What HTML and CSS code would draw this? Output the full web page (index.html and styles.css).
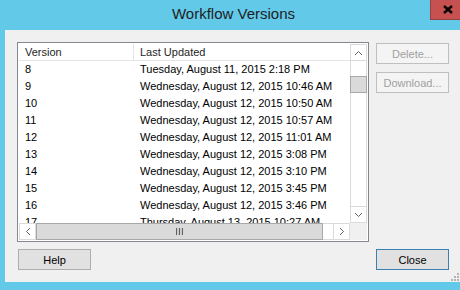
FILE: index.html
```html
<!DOCTYPE html>
<html lang="en">
  <head>
    <meta charset="UTF-8" />
    <meta name="viewport" content="width=device-width, initial-scale=1.0" />
    <title>Workflow Versions</title>
    <link rel="stylesheet" href="styles.css">
  </head>
  <body>
    <div class="window">
      <div class="titlebar">
        <span class="title">Workflow Versions</span>
        <button class="close-x" aria-label="Close">
          <svg width="10" height="9" viewBox="0 0 10 9">
            <path d="M1 1 L9 8 M9 1 L1 8" stroke="#000" stroke-width="2.4" />
          </svg>
        </button>
      </div>

      <div class="client">
        <!-- Versions list -->
        <div class="listview">
          <div class="list-area">
            <div class="list-header">
              <div class="cell">Version</div>
              <div class="cell">Last Updated</div>
            </div>
            <div class="list-row"><div class="cell">8</div><div class="cell">Tuesday, August 11, 2015 2:18 PM</div></div>
            <div class="list-row"><div class="cell">9</div><div class="cell">Wednesday, August 12, 2015 10:46 AM</div></div>
            <div class="list-row"><div class="cell">10</div><div class="cell">Wednesday, August 12, 2015 10:50 AM</div></div>
            <div class="list-row"><div class="cell">11</div><div class="cell">Wednesday, August 12, 2015 10:57 AM</div></div>
            <div class="list-row"><div class="cell">12</div><div class="cell">Wednesday, August 12, 2015 11:01 AM</div></div>
            <div class="list-row"><div class="cell">13</div><div class="cell">Wednesday, August 12, 2015 3:08 PM</div></div>
            <div class="list-row"><div class="cell">14</div><div class="cell">Wednesday, August 12, 2015 3:10 PM</div></div>
            <div class="list-row"><div class="cell">15</div><div class="cell">Wednesday, August 12, 2015 3:45 PM</div></div>
            <div class="list-row"><div class="cell">16</div><div class="cell">Wednesday, August 12, 2015 3:46 PM</div></div>
            <div class="list-row"><div class="cell">17</div><div class="cell">Thursday, August 13, 2015 10:27 AM</div></div>
          </div>

          <div class="vscroll">
            <div class="arrow-box">
              <svg width="9" height="6" viewBox="0 0 9 6"><path d="M1 5 L4.5 1.5 L8 5" fill="none" stroke="#606060" stroke-width="1" /></svg>
            </div>
            <div class="v-gap"></div>
            <div class="v-thumb"></div>
            <div class="v-rest"></div>
            <div class="arrow-box">
              <svg width="9" height="6" viewBox="0 0 9 6"><path d="M1 1 L4.5 4.5 L8 1" fill="none" stroke="#606060" stroke-width="1" /></svg>
            </div>
          </div>

          <div class="hscroll">
            <div class="arrow-box">
              <svg width="6" height="9" viewBox="0 0 6 9"><path d="M5 1 L1.5 4.5 L5 8" fill="none" stroke="#606060" stroke-width="1" /></svg>
            </div>
            <div class="h-thumb">
              <svg width="7" height="7" viewBox="0 0 7 7"><path d="M0.5 0 V7 M3.5 0 V7 M6.5 0 V7" stroke="#606060" stroke-width="1.2" /></svg>
            </div>
            <div class="h-rest"></div>
            <div class="arrow-box">
              <svg width="6" height="9" viewBox="0 0 6 9"><path d="M1 1 L4.5 4.5 L1 8" fill="none" stroke="#606060" stroke-width="1" /></svg>
            </div>
          </div>

          <div class="corner"></div>
        </div>

        <div class="side-buttons">
          <button class="btn" disabled>Delete...</button>
          <button class="btn" disabled>Download...</button>
        </div>

        <div class="footer">
          <button class="btn">Help</button>
          <button class="btn btn-default">Close</button>
        </div>

        <svg class="grip" width="8" height="8" viewBox="0 0 8 8">
          <rect x="6" y="0" width="2" height="2" fill="#b4b4b4" />
          <rect x="3" y="3" width="2" height="2" fill="#b4b4b4" />
          <rect x="6" y="3" width="2" height="2" fill="#b4b4b4" />
          <rect x="0" y="6" width="2" height="2" fill="#b4b4b4" />
          <rect x="3" y="6" width="2" height="2" fill="#b4b4b4" />
          <rect x="6" y="6" width="2" height="2" fill="#b4b4b4" />
        </svg>
      </div>
    </div>
  </body>
</html>
```

FILE: styles.css
```css
* {
  margin: 0;
  padding: 0;
  box-sizing: border-box;
  font-family: "Liberation Sans", Arial, sans-serif;
}

body {
  background-color: #63c9e9;
  overflow: hidden;
  width: 460px;
  height: 290px;
}

/* Window frame */
.window {
  width: 467px;
  padding-bottom: 8px;
  background: #63c9e9;
}

.titlebar {
  position: relative;
  height: 30px;
  display: flex;
  justify-content: center;
}

.title {
  color: #1e1e1e;
  font-size: 15px;
  line-height: 28px;
}

.close-x {
  position: absolute;
  top: 0;
  right: 2px;
  width: 35px;
  height: 20px;
  background: #c75050;
  border: 1px solid #93403f;
  border-top: none;
  display: flex;
  align-items: center;
  justify-content: center;
}

/* Client area */
.client {
  position: relative;
  margin: 0 5px;
  height: 252px;
  background: #f0f0f0;
  padding: 12px 0 0 12px;
  display: grid;
  grid-template-columns: 352px 73px;
  grid-template-rows: 200px 21px;
  column-gap: 7px;
  row-gap: 7px;
}

/* List view */
.listview {
  border: 1px solid #828790;
  padding: 1px;
  background: #fff;
  display: grid;
  grid-template-columns: 1fr 17px;
  grid-template-rows: 1fr 17px;
  overflow: hidden;
}

.list-area {
  overflow: hidden;
  font-size: 11px;
  color: #000;
}

.list-header,
.list-row {
  display: grid;
  grid-template-columns: 115px 230px;
  height: 17px;
  line-height: 16px;
  white-space: nowrap;
}

.list-header {
  border-bottom: 1px solid #e5e5e5;
  color: #1e1e1e;
}

.list-header .cell:first-child {
  border-right: 1px solid #e5e5e5;
}

.cell {
  padding-left: 6px;
}

.list-row {
  line-height: 17px;
}

/* Scrollbars */
.vscroll {
  display: flex;
  flex-direction: column;
  border-left: 1px solid #dadada;
  border-right: 1px solid #dadada;
}

.hscroll {
  display: flex;
  border-top: 1px solid #dadada;
  border-bottom: 1px solid #dadada;
}

.arrow-box {
  width: 17px;
  height: 17px;
  flex: none;
  background: #fff;
  border: 1px solid #dadada;
  display: flex;
  align-items: center;
  justify-content: center;
}

.vscroll .arrow-box {
  margin: 0 -1px;
}

.hscroll .arrow-box {
  margin: -1px 0;
}

.v-gap {
  height: 15px;
}

.v-thumb {
  height: 17px;
  margin: 0 -1px;
  background: #dadada;
  border: 1px solid #a8a8a8;
}

.v-rest {
  flex: 1;
}

.h-thumb {
  width: 287px;
  margin: -1px 0;
  background: #dadada;
  border: 1px solid #a8a8a8;
  display: flex;
  align-items: center;
  justify-content: center;
}

.h-rest {
  flex: 1;
}

.corner {
  background: #f0f0f0;
}

/* Buttons */
.side-buttons {
  display: flex;
  flex-direction: column;
  gap: 8px;
  padding-top: 1px;
}

.btn {
  width: 73px;
  height: 21px;
  font-size: 11px;
  color: #000;
  background: #e1e1e1;
  border: 1px solid #adadad;
}

.btn:disabled {
  color: #a0a0a0;
  background: #f4f4f4;
  border-color: #bfbfbf;
}

.btn-default {
  border-color: #3c7fb1;
}

.footer {
  grid-column: 1 / 3;
  display: flex;
  justify-content: space-between;
  padding-left: 1px;
}

.grip {
  position: absolute;
  right: 3px;
  bottom: 1px;
}
```
